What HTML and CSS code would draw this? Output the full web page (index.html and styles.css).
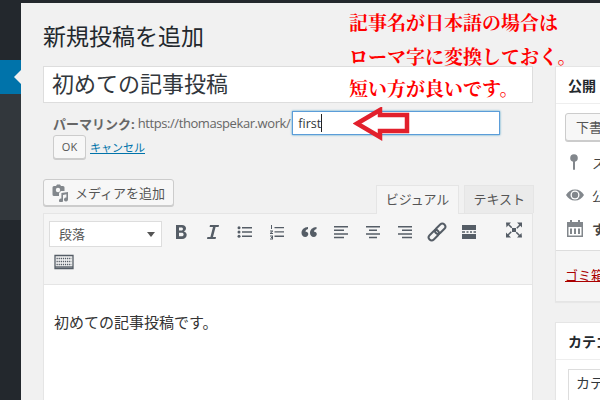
FILE: index.html
```html
<!DOCTYPE html>
<html lang="ja">
<head>
<meta charset="utf-8">
<title>新規投稿を追加</title>
<link rel="stylesheet" href="styles.css">
</head>
<body>
<div class="topbar"></div>
<div class="shell">
  <nav class="side">
    <div class="side-a"></div>
    <div class="side-active"><span class="side-arrow"></span></div>
    <div class="side-b"></div>
    <div class="side-c"></div>
  </nav>
  <main class="main">
    <div class="col-left">
      <h1 class="page-title">新規投稿を追加</h1>
      <div class="title-box">初めての記事投稿</div>
      <div class="permalink">
        <b>パーマリンク:</b><span class="url">https://thomaspekar.work/</span><span class="slug">first<i class="caret"></i></span>
      </div>
      <div class="perma-actions"><span class="btn-ok">OK</span><a class="cancel">キャンセル</a></div>
      <div class="tabs-row">
        <span class="btn-media">
          <svg class="media-ic" width="18" height="18" viewBox="0 0 18 18"><path fill="#82878c" d="M3 2h2l1-1.500h3L10 2h2a1.500 1.500 0 0 1 1.500 1.500V7H10L8 9v3H3a1.500 1.500 0 0 1-1.500-1.500v-7A1.500 1.500 0 0 1 3 2z"/><circle cx="7" cy="6" r="2.200" fill="#f7f7f7"/><path fill="#82878c" d="M17 8v7.500a2 2 0 1 1-1.600-2V10.200l-3.400.7v5.600a2 2 0 1 1-1.600-2V9z"/></svg>
          メディアを追加</span>
        <span class="tabs"><span class="tab tab-on">ビジュアル</span><span class="tab">テキスト</span></span>
      </div>
      <div class="editor">
        <div class="toolbar">
          <div class="tb-row">
            <span class="select">段落<i class="select-arrow"></i></span>
            <span class="tb"><svg width="20" height="20" viewBox="0 0 20 20"><path fill="#555d66" d="M5 3h6c2.500 0 4 1.300 4 3.300 0 1.500-.8 2.600-2.100 3.100 1.700.4 2.800 1.700 2.800 3.400 0 2.500-1.800 4.200-4.600 4.200H5zm3 2.400v3h2.300c1.100 0 1.700-.6 1.700-1.500s-.6-1.500-1.700-1.500zm0 5.300v3.500h2.600c1.300 0 2-.7 2-1.800s-.7-1.700-2-1.700z"/></svg></span>
            <span class="tb"><svg width="20" height="20" viewBox="0 0 20 20"><path fill="#555d66" d="M7 3h9l-.4 2h-3L10 15h3l-.4 2H4l.4-2h3l2.600-10H6.600z"/></svg></span>
            <span class="tb"><svg width="20" height="20" viewBox="0 0 20 20"><path fill="#555d66" d="M7 5h10v1.500H7zm0 4.300h10v1.500H7zm0 4.300h10v1.500H7z"/><circle cx="4" cy="5.700" r="1.500" fill="#555d66"/><circle cx="4" cy="10" r="1.500" fill="#555d66"/><circle cx="4" cy="14.300" r="1.500" fill="#555d66"/></svg></span>
            <span class="tb"><svg width="20" height="20" viewBox="0 0 20 20"><path fill="#555d66" d="M7.500 5H17v1.300H7.500zm0 4.300H17v1.300H7.500zm0 4.300H17v1.300H7.500zM4 3h1v4H4zM3 8.500h3v1L4.300 11H6v1H3v-1l1.800-1.500H3zM3 13.500h3v4H3v-1h2v-.5H4v-1h1v-.5H3z"/></svg></span>
            <span class="tb"><svg width="20" height="20" viewBox="0 0 20 20"><path fill="#555d66" d="M9 5v2C7.300 7.300 6.600 8.500 6.500 9.800 8 9.400 9.300 10.500 9.300 12s-1.200 3-3 3C4 15 2.500 13.300 2.500 11 2.500 7.800 5 5.200 9 5zm8.500 0v2c-1.700.3-2.400 1.500-2.500 2.800 1.500-.4 2.800.7 2.800 2.200s-1.200 3-3 3c-2.300 0-3.800-1.700-3.800-4 0-3.200 2.500-5.800 6.500-6z"/></svg></span>
            <span class="tb"><svg width="20" height="20" viewBox="0 0 20 20"><path fill="#555d66" d="M3 4h14v1.500H3zm0 3.600h10v1.500H3zm0 3.600h14v1.500H3zm0 3.600h10v1.500H3z"/></svg></span>
            <span class="tb"><svg width="20" height="20" viewBox="0 0 20 20"><path fill="#555d66" d="M3 4h14v1.500H3zm3 3.600h8v1.500H6zm-3 3.600h14v1.500H3zm3 3.600h8v1.500H6z"/></svg></span>
            <span class="tb"><svg width="20" height="20" viewBox="0 0 20 20"><path fill="#555d66" d="M3 4h14v1.500H3zm4 3.600h10v1.500H7zm-4 3.600h14v1.500H3zm4 3.600h10v1.500H7z"/></svg></span>
            <span class="tb"><svg width="20" height="20" viewBox="0 0 20 20"><g transform="rotate(-45 10 10)" fill="none" stroke="#555d66" stroke-width="2"><rect x="-0.500" y="7" width="12" height="6" rx="3"/><rect x="8.500" y="7" width="12" height="6" rx="3"/></g></svg></span>
            <span class="tb"><svg width="20" height="20" viewBox="0 0 20 20"><path fill="#555d66" d="M3 3h14v5H3zm0 9h14v5H3zM3 9.200h3v1.600H3zm4.500 0h2v1.600h-2zm3.500 0h2v1.600h-2zm3.500 0H17v1.600h-2.500z"/></svg></span>
            <span class="tb tb-full"><svg width="20" height="20" viewBox="0 0 20 20"><path fill="#555d66" d="M2 2.500h5L5.300 4.200l3 3-1.100 1.100-3-3L2.500 7.500zm16 0v5l-1.700-1.700-3 3-1.100-1.100 3-3L13 2.500zm0 15h-5l1.700-1.700-3-3 1.100-1.100 3 3 1.700-1.700zm-16 0v-5l1.700 1.700 3-3 1.100 1.100-3 3L7 17.500z"/><rect x="8" y="8" width="4" height="4" fill="#555d66"/></svg></span>
          </div>
          <div class="tb-row">
            <span class="tb tb-kb"><svg width="20" height="20" viewBox="0 0 20 20"><path fill="none" stroke="#555d66" stroke-width="1.300" d="M1 3.500h18v13H1z"/><path stroke="#555d66" stroke-width="1.600" stroke-dasharray="1.300 .8" d="M2.500 6.500h15M2.500 9.500h15M2.500 12.500h15"/><path stroke="#555d66" stroke-width="1.400" d="M1 15h18"/></svg></span>
          </div>
        </div>
        <div class="content">初めての記事投稿です。</div>
      </div>
    </div>
    <aside class="col-right">
      <section class="box box-publish">
        <h2 class="box-title">公開</h2>
        <div class="pub-body">
          <span class="btn-draft">下書きとして保存</span>
          <div class="pub-row pub-first">
            <svg width="20" height="20" viewBox="0 0 20 20"><circle cx="9" cy="6" r="3.800" fill="#82878c"/><rect x="8" y="8" width="2" height="10" rx="1" fill="#82878c"/></svg>
            <span>ステータス: 下書き</span></div>
          <div class="pub-row">
            <svg width="20" height="20" viewBox="0 0 20 20"><path fill="#82878c" d="M1 10c2-3.500 5-5.500 9-5.500s7 2 9 5.500c-2 3.500-5 5.500-9 5.500S3 13.500 1 10z"/><circle cx="10" cy="10" r="4.500" fill="#fff"/><circle cx="10" cy="10" r="3.200" fill="#82878c"/></svg>
            <span>公開状態: 公開</span></div>
          <div class="pub-row pub-strong">
            <svg width="20" height="20" viewBox="0 0 20 20"><path fill="#82878c" d="M2 4h3V2h2v2h6V2h2v2h3v15H2zm1.500 5v8.500h13V9zM5 10.500h2V16H5zm4 0h2V16H9zm4 0h2V16h-2z" fill-rule="evenodd"/></svg>
            <span>すぐに公開する</span></div>
        </div>
        <div class="pub-foot"><a class="trash">ゴミ箱へ移動</a></div>
      </section>
      <section class="box">
        <h2 class="box-title">カテゴリー</h2>
        <div class="cat-body"><div class="cat-tab">カテゴリー一覧</div></div>
      </section>
    </aside>
    <div class="note">
      <p>記事名が日本語の場合は</p>
      <p class="note-2">ローマ字に変換しておく。</p>
      <p class="note-3">短い方が良いです。</p>
    </div>
    <svg class="arrow" width="58" height="34" viewBox="0 0 58 34"><path fill="none" stroke="#e2202c" stroke-width="4.500" d="M27 3L4 16.500 27 30v-6h27V8H27z"/></svg>
  </main>
</div>
</body>
</html>
```
FILE: styles.css
```css
* { box-sizing: border-box; }
html, body { margin: 0; height: 100%; overflow: hidden; }
body { width: 600px; height: 400px; background: #f1f1f1; color: #444; font-family: "Open Sans", "Noto Sans CJK JP", sans-serif; font-size: 13px; }
.topbar { height: 3px; background: #23282d; }
.shell { display: flex; height: 397px; }
.side { width: 21px; flex: none; display: flex; flex-direction: column; }
.side-a { height: 57px; background: #23282d; }
.side-active { height: 34px; background: #0073aa; position: relative; }
.side-arrow { position: absolute; right: 0; top: 10px; border: 7px solid transparent; border-right-color: #f1f1f1; border-left-width: 0; }
.side-b { height: 126px; background: #32373c; }
.side-c { flex: 1; background: #23282d; }
.main { flex: 1; position: relative; display: flex; padding-left: 22px; gap: 22px; min-width: 0; overflow: hidden; }
.col-left { width: 490px; flex: none; }
.col-right { width: 300px; flex: none; margin-top: 63px; }
.page-title { margin: 17px 0 0; height: 46px; font-size: 23px; line-height: 32px; font-weight: 400; color: #23282d; }
.title-box { height: 37px; background: #fff; border: 1px solid #ddd; font-size: 22px; line-height: 32px; padding-left: 8px; color: #32373c; }
.permalink { display: flex; align-items: center; height: 24px; margin-top: 8px; padding-left: 10px; color: #666; }
.permalink b { margin-right: 3px; font-weight: 700; }
.url { letter-spacing: -0.42px; }
.slug { width: 208px; height: 24px; margin-left: 2px; background: #fff; border: 1px solid #5b9dd9; box-shadow: 0 0 2px rgba(30,140,190,.8); padding-left: 5px; color: #32373c; font-size: 12.500px; display: flex; align-items: center; }
.caret { width: 1px; height: 18px; background: #222; }
.perma-actions { display: flex; align-items: center; gap: 4px; margin: 0 0 0 10px; }
.btn-ok { width: 33px; height: 24px; background: #f7f7f7; border: 1px solid #ccc; border-radius: 3px; box-shadow: 0 1px 0 #ccc; font-size: 11px; line-height: 21px; text-align: center; color: #555; }
.cancel { color: #0073aa; text-decoration: underline; font-size: 11px; }
.tabs-row { display: flex; justify-content: space-between; align-items: flex-end; margin-top: 20px; height: 34px; }
.btn-media { display: flex; align-items: center; gap: 6px; width: 131px; height: 27px; margin-bottom: 7px; padding-left: 7px; background: #f7f7f7; border: 1px solid #ccc; border-radius: 3px; box-shadow: 0 1px 0 #ccc; color: #555; font-size: 13px; }
.tabs { display: flex; gap: 5px; margin-right: -1px; }
.tab { display: block; height: 28px; padding: 0 8px; background: #ebebeb; border: 1px solid #e5e5e5; border-bottom: 0; line-height: 27px; color: #555; font-size: 13px; }
.tab-on { background: #f5f5f5; height: 29px; padding: 0 9px; margin-bottom: -1px; position: relative; }
.editor { border: 1px solid #e5e5e5; background: #fff; height: 300px; }
.toolbar { background: #f5f5f5; border-bottom: 1px solid #e5e5e5; height: 71px; padding: 7px 5px 0; }
.tb-row { display: flex; align-items: flex-start; height: 27px; }
.select { position: relative; flex: none; width: 113px; height: 26px; margin-right: 3px; background: #fff; border: 1px solid #ddd; padding-left: 9px; line-height: 24px; color: #555; }
.select-arrow { position: absolute; right: 6px; top: 10px; border: 4px solid transparent; border-top: 5px solid #555; border-bottom: 0; }
.tb { flex: none; width: 32px; height: 22px; display: flex; align-items: center; justify-content: center; }
.tb-full { margin-left: 13px; height: 18px; }
.tb-kb { width: 20px; margin-left: 5px; height: 27px; }
.content { padding: 27px 10px; font-size: 15px; line-height: 21px; color: #333; }
.box { background: #f5f5f5; border: 1px solid #e5e5e5; box-shadow: 0 1px 1px rgba(0,0,0,.04); margin-bottom: 20px; }
.box-publish { background: #fff; }
.box-title { margin: 0; height: 37px; padding-left: 12px; font-size: 14px; line-height: 38px; font-weight: 700; color: #23282d; background: #fff; border-bottom: 1px solid #eee; }
.pub-body { background: #fff; padding: 9px 9px 8px; height: 146px; }
.btn-draft { display: block; width: 120px; height: 28px; padding-left: 10px; background: #f7f7f7; border: 1px solid #ccc; border-radius: 3px; box-shadow: 0 1px 0 #ccc; line-height: 26px; color: #555; white-space: nowrap; }
.pub-row { display: flex; align-items: center; gap: 7px; height: 20px; margin: 13px 0 0 0; white-space: nowrap; color: #444; }
.pub-row svg { flex: none; }
.pub-first { margin-top: 11px; }
.pub-strong { font-weight: 700; }
.pub-foot { height: 51px; background: #f5f5f5; border-top: 1px solid #ddd; padding: 14px 9px; }
.trash { color: #a00; text-decoration: underline; font-size: 13px; }
.cat-body { background: #fff; padding: 9px 12px; height: 60px; }
.cat-tab { border: 1px solid #ddd; border-bottom: 0; height: 50px; padding: 2px 7px; font-size: 14px; color: #32373c; }
.note { position: absolute; left: 328px; top: 3px; color: #f00; font-family: "Noto Serif CJK JP", "Noto Sans CJK JP", serif; font-size: 19px; font-weight: 700; line-height: 32px; }
.note p { margin: 0; white-space: nowrap; }
.note .note-2 { margin-top: 2px; }
.note .note-3 { margin-top: 0; }
.arrow { position: absolute; left: 332px; top: 104px; }
```
